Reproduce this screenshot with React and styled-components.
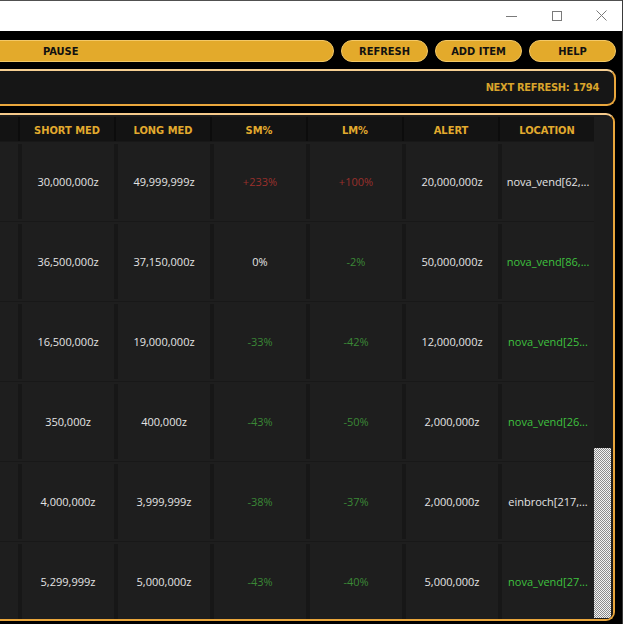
import React from "react";
import styled, { createGlobalStyle } from "styled-components";

const Global = createGlobalStyle`
  html, body, #root { height: 100%; }
  body { margin: 0; background: #ffffff; overflow: hidden; }
`;

const Window = styled.div`
  width: 622px;
  height: 624px;
  border-right: 1px solid #3a3a3a;
  display: flex;
  flex-direction: column;
  background: #000;
  overflow: hidden;
`;

const TitleBar = styled.div`
  height: 30px;
  flex: none;
  background: #fff;
  border-top: 1px solid #505050;
  display: flex;
  justify-content: flex-end;
  align-items: center;
`;

const WinButton = styled.div`
  box-sizing: border-box;
  width: 45px;
  height: 30px;
  padding-left: 5px;
  display: flex;
  align-items: center;
  justify-content: center;
  color: #7a7a7a;
`;

const Content = styled.div`
  flex: 1;
  min-height: 0;
  margin-left: -20px;
  padding: 9px 6px 3px 0;
  display: flex;
  flex-direction: column;
  gap: 7px;
`;

const Toolbar = styled.div`
  display: flex;
  gap: 7px;
  height: 22px;
  flex: none;
`;

const boldFont = `"DejaVu Sans Condensed", "DejaVu Sans", sans-serif`;

const Button = styled.button`
  box-sizing: border-box;
  flex: ${(p) => (p.$wide ? "1" : "none")};
  width: ${(p) => (p.$wide ? "auto" : "87px")};
  height: 22px;
  border-radius: 11px;
  border: 1px solid #f3c866;
  background: #e3aa2b;
  color: #111;
  font-family: ${boldFont};
  font-stretch: condensed;
  font-weight: bold;
  font-size: 11px;
  padding: 0 0 0 ${(p) => (p.$wide ? "62px" : "0")};
  text-align: ${(p) => (p.$wide ? "left" : "center")};
  cursor: pointer;
`;

const StatusPanel = styled.div`
  flex: none;
  height: 33px;
  border: 2px solid #e9a63c;
  border-top-color: #f6cf92;
  border-radius: 9px;
  background: #161616;
  display: flex;
  align-items: center;
  justify-content: flex-end;
  padding-right: 15px;
`;

const StatusText = styled.span`
  color: #d9a42b;
  font-family: ${boldFont};
  font-stretch: condensed;
  font-weight: bold;
  font-size: 11px;
  letter-spacing: -0.3px;
`;

const TablePanel = styled.div`
  flex: 1;
  min-height: 0;
  margin-right: 1px;
  border: 2px solid #e9a63c;
  border-top-color: #f4c98a;
  border-radius: 9px;
  background: #1a1a1a;
  padding-top: 2px;
  display: flex;
  overflow: hidden;
`;

const Table = styled.div`
  flex: 1;
  min-width: 0;
  display: flex;
  flex-direction: column;
`;

const HeaderRow = styled.div`
  display: flex;
  height: 24px;
  flex: none;
  background: #131313;
`;

const HeadCell = styled.div`
  box-sizing: border-box;
  flex: ${(p) => (p.$fill ? "1" : "none")};
  width: ${(p) => (p.$fill ? "auto" : "96px")};
  border-left: ${(p) => (p.$fill ? "none" : "2px solid #0c0c0c")};
  display: flex;
  align-items: center;
  justify-content: center;
  padding-top: 2px;
  color: #e2aa2e;
  font-family: ${boldFont};
  font-stretch: condensed;
  font-weight: bold;
  font-size: 11px;
`;

const Row = styled.div`
  display: flex;
  height: 79px;
  flex: none;
  background: #1e1e1e;
  border-top: 1px solid #181818;
`;

const Cell = styled.div`
  box-sizing: border-box;
  flex: ${(p) => (p.$fill ? "1" : "none")};
  width: ${(p) => (p.$fill ? "auto" : "96px")};
  padding: 2px 0;
  display: flex;
`;

const CellInner = styled.div`
  flex: 1;
  min-width: 0;
  border-left: ${(p) => (p.$fill ? "none" : "4px solid #171717")};
  display: flex;
  align-items: center;
  justify-content: center;
  font-family: "Open Sans", "Noto Sans", sans-serif;
  font-size: 11px;
  white-space: nowrap;
  color: ${(p) =>
    p.$tone === "red"
      ? "#9a302c"
      : p.$tone === "green"
      ? "#3b8836"
      : p.$tone === "bright"
      ? "#3fc23f"
      : "#e4e4e4"};
`;

const ScrollTrack = styled.div`
  width: 19px;
  flex: none;
  background: #1c1c1c;
  display: flex;
  flex-direction: column;
  justify-content: flex-end;
  padding: 0 2px 1px 0;
  box-sizing: border-box;
`;

const Thumb = styled.div`
  height: 170px;
  background: repeating-conic-gradient(#f4f4f4 0 25%, #8c8c8c 0 50%) 0 0 / 2px 2px;
`;

const columns = ["SHORT MED", "LONG MED", "SM%", "LM%", "ALERT", "LOCATION"];

const rows = [
  ["30,000,000z", "49,999,999z", ["+233%", "red"], ["+100%", "red"], "20,000,000z", ["nova_vend[62,...", "white"]],
  ["36,500,000z", "37,150,000z", ["0%", "white"], ["-2%", "green"], "50,000,000z", ["nova_vend[86,...", "bright"]],
  ["16,500,000z", "19,000,000z", ["-33%", "green"], ["-42%", "green"], "12,000,000z", ["nova_vend[25...", "bright"]],
  ["350,000z", "400,000z", ["-43%", "green"], ["-50%", "green"], "2,000,000z", ["nova_vend[26...", "bright"]],
  ["4,000,000z", "3,999,999z", ["-38%", "green"], ["-37%", "green"], "2,000,000z", ["einbroch[217,...", "white"]],
  ["5,299,999z", "5,000,000z", ["-43%", "green"], ["-40%", "green"], "5,000,000z", ["nova_vend[27...", "bright"]],
];

function Minimize() {
  return (
    <svg width="12" height="12" viewBox="0 0 12 12">
      <line x1="0" y1="6.5" x2="11" y2="6.5" stroke="currentColor" strokeWidth="1" />
    </svg>
  );
}
function Maximize() {
  return (
    <svg width="11" height="11" viewBox="0 0 11 11">
      <rect x="0.5" y="0.5" width="9" height="9" fill="none" stroke="currentColor" strokeWidth="1" />
    </svg>
  );
}
function Close() {
  return (
    <svg width="12" height="12" viewBox="0 0 12 12">
      <path d="M0.5 0.5 L10.5 10.5 M10.5 0.5 L0.5 10.5" stroke="currentColor" strokeWidth="1" fill="none" />
    </svg>
  );
}

export default function App() {
  return (
    <>
      <Global />
      <Window>
        <TitleBar>
          <WinButton><Minimize /></WinButton>
          <WinButton><Maximize /></WinButton>
          <WinButton><Close /></WinButton>
        </TitleBar>
        <Content>
          <Toolbar>
            <Button $wide>PAUSE</Button>
            <Button>REFRESH</Button>
            <Button>ADD ITEM</Button>
            <Button>HELP</Button>
          </Toolbar>
          <StatusPanel>
            <StatusText>NEXT REFRESH: 1794</StatusText>
          </StatusPanel>
          <TablePanel>
            <Table>
              <HeaderRow>
                <HeadCell $fill />
                {columns.map((c) => (
                  <HeadCell key={c}>{c}</HeadCell>
                ))}
              </HeaderRow>
              {rows.map((r, i) => (
                <Row key={i}>
                  <Cell $fill><CellInner $fill /></Cell>
                  {r.map((v, j) => {
                    const [text, tone] = Array.isArray(v) ? v : [v, "white"];
                    return (
                      <Cell key={j}>
                        <CellInner $tone={tone}>{text}</CellInner>
                      </Cell>
                    );
                  })}
                </Row>
              ))}
            </Table>
            <ScrollTrack>
              <Thumb />
            </ScrollTrack>
          </TablePanel>
        </Content>
      </Window>
    </>
  );
}
